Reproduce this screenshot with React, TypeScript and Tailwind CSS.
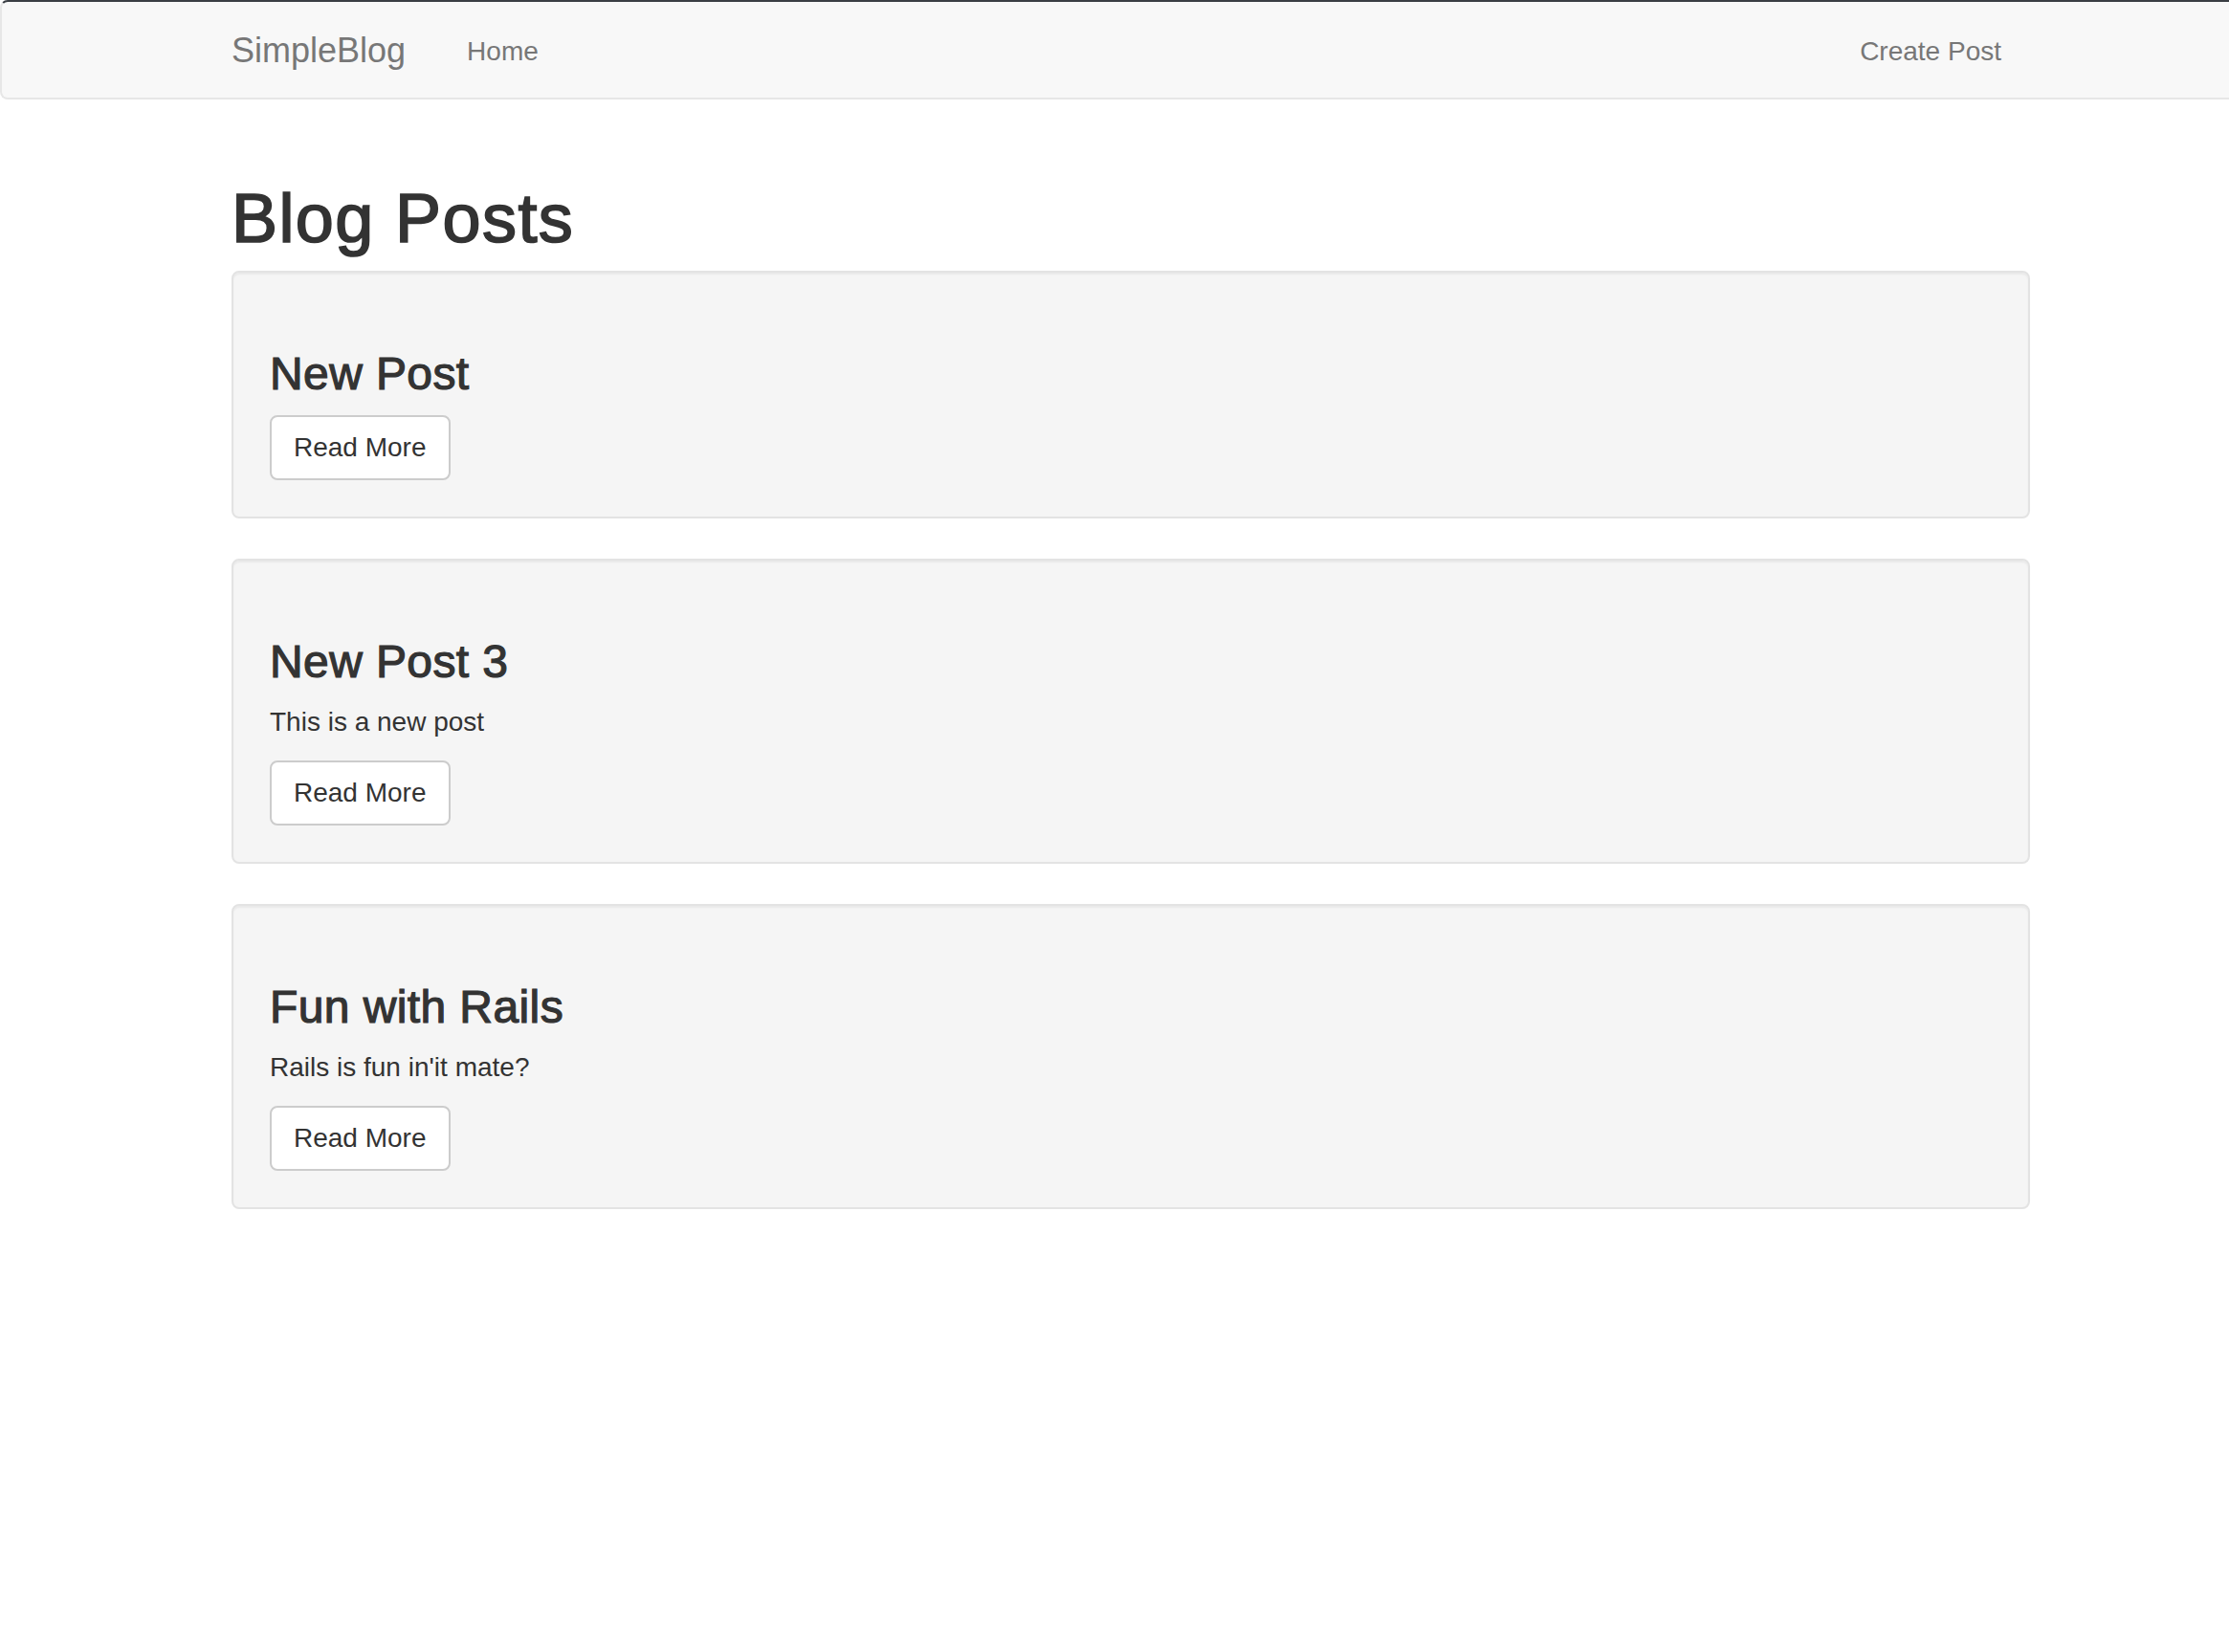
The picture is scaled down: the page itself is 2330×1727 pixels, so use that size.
import React from "react";

type Post = {
  title: string;
  body?: string;
};

const posts: Post[] = [
  { title: "New Post" },
  { title: "New Post 3", body: "This is a new post" },
  { title: "Fun with Rails", body: "Rails is fun in'it mate?" },
];

function Navbar() {
  return (
    <nav className="h-[104px] bg-[#f8f8f8] border-t-2 border-t-[#3a3e44] border-l-2 border-l-[#e7e7e7] border-b-2 border-b-[#e7e7e7] rounded-l-[8px]">
      <div className="ml-[240px] w-[1880px] flex items-start pt-[31px]">
        <a className="text-[36px] leading-[40px] text-[#777] cursor-pointer">SimpleBlog</a>
        <a className="ml-[64px] mt-[1px] text-[28px] leading-[40px] text-[#777] cursor-pointer">Home</a>
        <a className="ml-auto mr-[30px] mt-[1px] text-[28px] leading-[40px] text-[#777] cursor-pointer">
          Create Post
        </a>
      </div>
    </nav>
  );
}

function PostCard({ post }: { post: Post }) {
  return (
    <div className="bg-[#f5f5f5] border-2 border-[#e3e3e3] rounded-[8px] p-[38px] shadow-[inset_0_2px_2px_rgba(0,0,0,0.05)]">
      {/* medium weight faked with a thin stroke, Liberation has no 500 */}
      <h3 className="mt-[41px] mb-[17px] text-[48px] leading-[53px] tracking-[0.4px] text-[#333] [-webkit-text-stroke:1.2px_#333]">
        {post.title}
      </h3>
      {post.body && (
        <p className="mb-[20px] text-[28px] leading-[40px] text-[#333]">{post.body}</p>
      )}
      <button className="bg-white border-2 border-[#ccc] rounded-[8px] px-[23px] py-[12px] text-[28px] leading-[40px] text-[#333]">
        Read More
      </button>
    </div>
  );
}

export default function App() {
  return (
    <div className="min-h-screen bg-white font-['Liberation_Sans',Arial,sans-serif]">
      <Navbar />
      <main className="ml-[242px] w-[1880px] pt-[85px]">
        <h1 className="text-[72px] leading-[79px] tracking-[1.4px] text-[#333] mb-[15px] [-webkit-text-stroke:1.7px_#333]">
          Blog Posts
        </h1>
        <div className="flex flex-col gap-[42px]">
          {posts.map((post) => (
            <PostCard key={post.title} post={post} />
          ))}
        </div>
      </main>
    </div>
  );
}
